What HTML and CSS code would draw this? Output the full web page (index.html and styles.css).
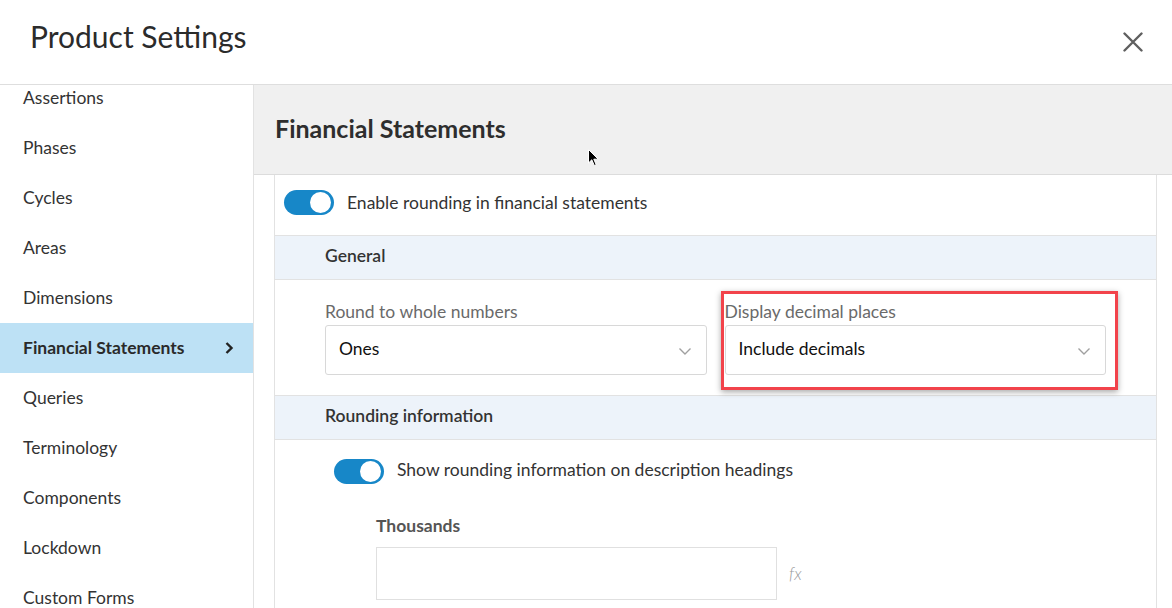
FILE: index.html
```html
<!DOCTYPE html>
<html>
<head>
<meta charset="utf-8">
<link rel="stylesheet" href="styles.css">
</head>
<body>
<div class="page">
  <header class="top">
    <h1 class="title">Product Settings</h1>
    <button class="close" aria-label="Close">
      <svg width="20" height="20" viewBox="0 0 20 20"><path d="M1.5 1.5 L18.5 18.5 M18.5 1.5 L1.5 18.5" stroke="#5f5f5f" stroke-width="2.4" stroke-linecap="round" fill="none"/></svg>
    </button>
  </header>
  <div class="main">
    <nav class="side">
      <ul class="navlist">
        <li class="navitem">Assertions</li>
        <li class="navitem">Phases</li>
        <li class="navitem">Cycles</li>
        <li class="navitem">Areas</li>
        <li class="navitem">Dimensions</li>
        <li class="navitem active">Financial Statements
          <svg class="chev" width="10" height="14" viewBox="0 0 10 14"><path d="M2.5 2 L7.5 7 L2.5 12" stroke="#222" stroke-width="2.4" fill="none"/></svg>
        </li>
        <li class="navitem">Queries</li>
        <li class="navitem">Terminology</li>
        <li class="navitem">Components</li>
        <li class="navitem">Lockdown</li>
        <li class="navitem">Custom Forms</li>
      </ul>
    </nav>
    <section class="content">
      <div class="chead">
        <h2 class="ctitle">Financial Statements</h2>
        <svg class="cursor" width="12" height="19" viewBox="0 0 12 19"><path d="M0.5 0.5 L0.5 14 L3.8 10.8 L6.3 16.5 L8.2 15.7 L5.8 10.2 L10.2 10.2 Z" fill="#000" stroke="#fff" stroke-width="1"/></svg>
      </div>
      <div class="cbody">
        <div class="card">
          <div class="row toggle-row">
            <span class="toggle"><span class="knob"></span></span>
            <span class="tlabel">Enable rounding in financial statements</span>
          </div>
          <div class="sect">General</div>
          <div class="fields">
            <div class="field">
              <div class="flabel">Round to whole numbers</div>
              <div class="select"><span>Ones</span>
                <svg class="dd" width="14" height="9" viewBox="0 0 14 9"><path d="M1.5 1.5 L7 7 L12.5 1.5" stroke="#a0a0a0" stroke-width="1.4" fill="none"/></svg>
              </div>
            </div>
            <div class="field hl">
              <div class="flabel">Display decimal places</div>
              <div class="select"><span>Include decimals</span>
                <svg class="dd" width="14" height="9" viewBox="0 0 14 9"><path d="M1.5 1.5 L7 7 L12.5 1.5" stroke="#a0a0a0" stroke-width="1.4" fill="none"/></svg>
              </div>
              <div class="redbox"></div>
            </div>
          </div>
          <div class="sect">Rounding information</div>
          <div class="rinfo">
            <div class="toggle-line">
              <span class="toggle"><span class="knob"></span></span>
              <span class="tlabel">Show rounding information on description headings</span>
            </div>
            <div class="thous">
              <div class="blabel">Thousands</div>
              <div class="inline">
                <div class="input"></div>
                <span class="fx">fx</span>
              </div>
            </div>
          </div>
        </div>
      </div>
    </section>
  </div>
</div>
</body>
</html>
```

FILE: styles.css
```css
* { box-sizing: border-box; }
html, body { margin: 0; padding: 0; }
body {
  font-family: Lato, "Noto Sans", "Liberation Sans", sans-serif;
  color: #333;
  background: #fff;
  width: 1172px;
  height: 608px;
  overflow: hidden;
}
.page { width: 1172px; height: 608px; display: flex; flex-direction: column; }
.top {
  height: 85px;
  flex: none;
  border-bottom: 1px solid #dedede;
  display: flex;
  align-items: center;
  justify-content: space-between;
  padding: 0 29px 0 30px;
}
.title {
  margin: 0;
  font-size: 30px;
  font-weight: 400;
  color: #2b2b2b;
  position: relative;
  top: -6px;
}
.close {
  border: 0;
  background: none;
  padding: 0;
  width: 20px;
  height: 20px;
  display: block;
}
.close svg { display: block; }
.main { flex: 1; display: flex; min-height: 0; }
.side {
  width: 254px;
  flex: none;
  border-right: 1px solid #e2e2e2;
  overflow: hidden;
}
.navlist { list-style: none; margin: -13px 0 0 0; padding: 0; }
.navitem {
  height: 50px;
  display: flex;
  align-items: center;
  padding: 0 19px 0 23px;
  font-size: 17.5px;
  color: #333;
  justify-content: space-between;
}
.navitem.active {
  background: #bde1f5;
  font-weight: 700;
  color: #2a2a2a;
  margin-top: 1px;
  margin-bottom: -1px;
  padding-bottom: 2px;
}
.chev { display: block; margin-top: 2px; }
.content { flex: 1; display: flex; flex-direction: column; min-width: 0; }
.chead {
  height: 90px;
  flex: none;
  background: #f0f0f0;
  border-bottom: 1px solid #dcdcdc;
  display: flex;
  align-items: center;
  padding-left: 21px;
  padding-bottom: 4px;
  position: relative;
}
.ctitle { margin: 0; font-size: 25px; font-weight: 700; color: #2e2e2e; }
.cursor { position: absolute; left: 334px; top: 64px; }
.cbody { flex: 1; padding: 0 15px 0 20px; min-height: 0; }
.card {
  height: 100%;
  border-left: 1px solid #e2e2e2;
  border-right: 1px solid #e2e2e2;
}
.toggle-row {
  height: 61px;
  border-bottom: 1px solid #e2e2e2;
  display: flex;
  align-items: center;
  padding-left: 9px;
  padding-bottom: 5px;
}
.toggle {
  width: 50px;
  height: 25px;
  border-radius: 13px;
  background: #1787c8;
  position: relative;
  flex: none;
  display: block;
}
.knob {
  position: absolute;
  right: 3px;
  top: 2px;
  width: 21px;
  height: 21px;
  border-radius: 50%;
  background: #fff;
}
.tlabel { margin-left: 13px; font-size: 17.5px; color: #333; }
.sect {
  height: 44px;
  background: #edf3fa;
  border-bottom: 1px solid #e2e2e2;
  display: flex;
  align-items: center;
  padding-left: 50px;
  padding-bottom: 5px;
  font-size: 17.5px;
  font-weight: 600;
  color: #333;
}
.fields {
  display: flex;
  gap: 18px;
  padding: 22px 50px 0 50px;
  height: 116px;
  border-bottom: 1px solid #e2e2e2;
}
.field { flex: 1; position: relative; }
.flabel { font-size: 17.5px; color: #6a6a6a; line-height: 20px; margin-bottom: 3px; }
.select {
  height: 50px;
  border: 1px solid #d8d8d8;
  border-radius: 3px;
  display: flex;
  align-items: center;
  justify-content: space-between;
  padding: 0 14px 3px 13px;
  font-size: 17.5px;
  color: #111;
}
.dd { display: block; margin-top: 5px; }
.redbox {
  position: absolute;
  left: -4px;
  top: -11px;
  width: 397px;
  height: 99px;
  border: 3px solid #f2434b;
  box-shadow: 0 2px 6px rgba(0,0,0,0.35);
  pointer-events: none;
}
.rinfo { padding: 19px 0 0 59px; }
.toggle-line { display: flex; align-items: center; height: 25px; }
.toggle-line .tlabel { position: relative; top: -2px; }
.thous { padding: 32px 0 0 42px; }
.blabel { font-size: 17.5px; font-weight: 700; color: #555; line-height: 20px; margin-bottom: 11px; }
.inline { display: flex; align-items: center; }
.input {
  width: 401px;
  height: 53px;
  border: 1px solid #e0e0e0;
  background: #fff;
}
.fx {
  margin-left: 12px;
  font-style: italic;
  font-size: 17px;
  color: #9a9a9a;
  font-weight: 300;
}
```
